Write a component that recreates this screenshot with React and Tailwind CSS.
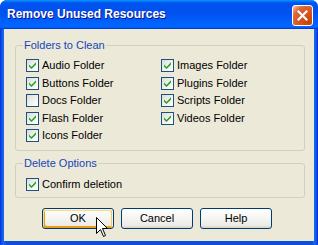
import React from "react";

function Check({ checked }) {
  return (
    <span className="w-[13px] h-[13px] shrink-0 border border-[#1c5180] bg-[linear-gradient(135deg,#dcdcd7_0%,#f4f4f0_60%,#ffffff_100%)] flex items-center justify-center">
      {checked && (
        <svg width="7" height="7" viewBox="0 0 7 7">
          <polygon points="0,2.5 2.5,5 7,0.3 7,2.6 2.5,7 0,4.6" fill="#21a121" />
        </svg>
      )}
    </span>
  );
}

function Item({ label, checked }) {
  return (
    <div className="h-[17.5px] flex items-center gap-[3px]">
      <Check checked={checked} />
      <span className="text-[11px] leading-[13px] text-black">{label}</span>
    </div>
  );
}

function Btn({ children, focused }) {
  return (
    <button
      className={
        "w-[72px] h-[21px] rounded-[3px] border border-[#003c74] bg-[linear-gradient(180deg,#ffffff_0%,#f4f4f0_50%,#ecebe6_86%,#d6d0c5_100%)] text-[11px] text-black flex items-center justify-center " +
        (focused
          ? "shadow-[inset_-1px_1px_#fff0cf,inset_1px_2px_#fdd889,inset_-2px_2px_#fbc761,inset_2px_-2px_#e5a01a]"
          : "")
      }
    >
      {children}
    </button>
  );
}

export default function App() {
  return (
    <div
      className="relative w-[318px] h-[245px] flex flex-col rounded-t-[7px] overflow-hidden bg-[linear-gradient(90deg,#0831d9_0%,#166aee_1%,#0b4fd9_2%,#0b4fd9_98%,#166aee_99%,#0831d9_100%)]"
      style={{ fontFamily: '"Liberation Sans", Arial, sans-serif' }}
    >
      <div className="h-[29px] shrink-0 flex items-start justify-between pl-[7px] pr-[5px] bg-[linear-gradient(180deg,#0997ff_0%,#0053ee_10%,#0050ee_40%,#0066ff_88%,#0066ff_93%,#005bff_95%,#003dd7_96%,#003dd7_100%)]">
        <span className="mt-[7px] text-white font-bold text-[12px] leading-[14px] [text-shadow:1px_1px_#0f1089]">
          Remove Unused Resources
        </span>
        <div className="mt-[5px] w-[21px] h-[21px] rounded-[3px] border border-white bg-[radial-gradient(circle_at_85%_85%,#c84400_0%,#dc5a26_55%,#d96a3c_72%,#f3a584_90%,#ffd9c8_100%)] flex items-center justify-center">
          <svg width="11" height="11" viewBox="0 0 11 11">
            <path d="M1.5 1.5 L9.5 9.5 M9.5 1.5 L1.5 9.5" stroke="#ffffff" strokeWidth="2.2" strokeLinecap="square" />
          </svg>
        </div>
      </div>
      <div className="flex-1 mx-[4px] mb-[4px] bg-[#ece9d8] pt-[10px] pl-[11px] flex flex-col">
        <fieldset className="w-[290px] border border-[#d0d0bf] rounded-[3px]">
          <legend className="ml-[7px] px-[1px] text-[11px] leading-[13px] text-[#1546b8]">Folders to Clean</legend>
          <div className="flex pt-[5px] pb-[5px] pl-[10px]">
            <div className="w-[135px] flex flex-col">
              <Item label="Audio Folder" checked />
              <Item label="Buttons Folder" checked />
              <Item label="Docs Folder" />
              <Item label="Flash Folder" checked />
              <Item label="Icons Folder" checked />
            </div>
            <div className="flex flex-col">
              <Item label="Images Folder" checked />
              <Item label="Plugins Folder" checked />
              <Item label="Scripts Folder" checked />
              <Item label="Videos Folder" checked />
            </div>
          </div>
        </fieldset>
        <fieldset className="mt-[6px] w-[290px] border border-[#d0d0bf] rounded-[3px]">
          <legend className="ml-[7px] px-[1px] text-[11px] leading-[13px] text-[#1546b8]">Delete Options</legend>
          <div className="pt-[6px] pb-[4px] pl-[10px]">
            <Item label="Confirm deletion" checked />
          </div>
        </fieldset>
        <div className="mt-[10px] ml-[27px] flex gap-[7px]">
          <Btn focused>OK</Btn>
          <Btn>Cancel</Btn>
          <Btn>Help</Btn>
        </div>
      </div>
      <svg className="absolute left-[96px] top-[217px]" width="13" height="21" viewBox="0 0 13 21">
        <path
          d="M0.5 0.5 L0.5 16.5 L4.5 12.5 L7.5 19.5 L9.5 18.5 L6.5 11.5 L11.5 11.5 Z"
          fill="#ffffff"
          stroke="#000000"
          strokeWidth="1"
        />
      </svg>
    </div>
  );
}
